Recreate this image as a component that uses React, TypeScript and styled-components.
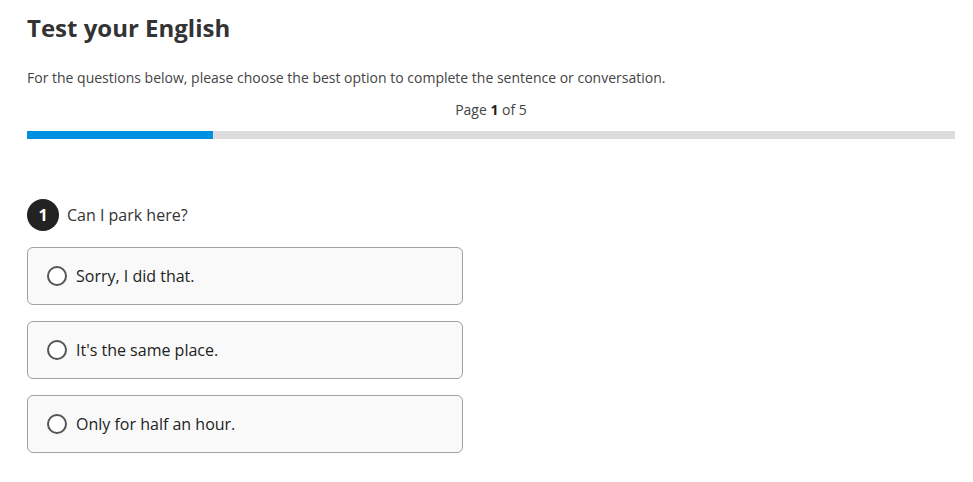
import styled, { createGlobalStyle } from 'styled-components';

const GlobalStyle = createGlobalStyle`
  body {
    margin: 0;
    background: #ffffff;
    font-family: 'Open Sans', 'Noto Sans', sans-serif;
    color: #333333;
  }
`;

const Page = styled.div`
  padding: 10px 18px 0 27px;
`;

const Title = styled.h1`
  margin: 0;
  font-size: 24px;
  font-weight: 700;
  line-height: 36px;
  color: #333333;
`;

const Intro = styled.p`
  margin: 22px 0 0;
  font-size: 14px;
  line-height: 20px;
  color: #444444;
`;

const PageCount = styled.p`
  margin: 12px 0 0;
  text-align: center;
  font-size: 14px;
  line-height: 20px;
  color: #444444;

  b {
    color: #222222;
  }
`;

const Track = styled.div`
  margin-top: 11px;
  height: 8px;
  background: #dddddd;
`;

const Fill = styled.div`
  height: 100%;
  background: #0090e3;
`;

const Question = styled.div`
  display: flex;
  align-items: center;
  gap: 8px;
  margin-top: 60px;
`;

const Number = styled.span`
  display: flex;
  align-items: center;
  justify-content: center;
  width: 32px;
  height: 32px;
  border-radius: 50%;
  background: #222222;
  color: #ffffff;
  font-size: 16px;
  font-weight: 700;
`;

const QuestionText = styled.span`
  font-size: 16px;
  color: #333333;
`;

const Options = styled.div`
  display: flex;
  flex-direction: column;
  gap: 16px;
  margin-top: 16px;
  width: 436px;
`;

const Option = styled.label`
  display: flex;
  align-items: center;
  gap: 9px;
  height: 58px;
  box-sizing: border-box;
  padding: 0 19px;
  border: 1px solid #a0a0a0;
  border-radius: 6px;
  background: #f9f9f9;
  cursor: pointer;
`;

const Radio = styled.span`
  width: 20px;
  height: 20px;
  box-sizing: border-box;
  border: 2px solid #555555;
  border-radius: 50%;
  background: #ffffff;
`;

const OptionText = styled.span`
  font-size: 16px;
  color: #222222;
`;

const answers = ['Sorry, I did that.', "It's the same place.", 'Only for half an hour.'];

const App = () => {
  const current = 1;
  const total = 5;
  return (
    <Page>
      <GlobalStyle />
      <Title>Test your English</Title>
      <Intro>For the questions below, please choose the best option to complete the sentence or conversation.</Intro>
      <PageCount>
        Page <b>{current}</b> of {total}
      </PageCount>
      <Track>
        <Fill style={{ width: `${(current / total) * 100}%` }} />
      </Track>
      <Question>
        <Number>1</Number>
        <QuestionText>Can I park here?</QuestionText>
      </Question>
      <Options>
        {answers.map((a) => (
          <Option key={a}>
            <Radio />
            <OptionText>{a}</OptionText>
          </Option>
        ))}
      </Options>
    </Page>
  );
};

export default App;
